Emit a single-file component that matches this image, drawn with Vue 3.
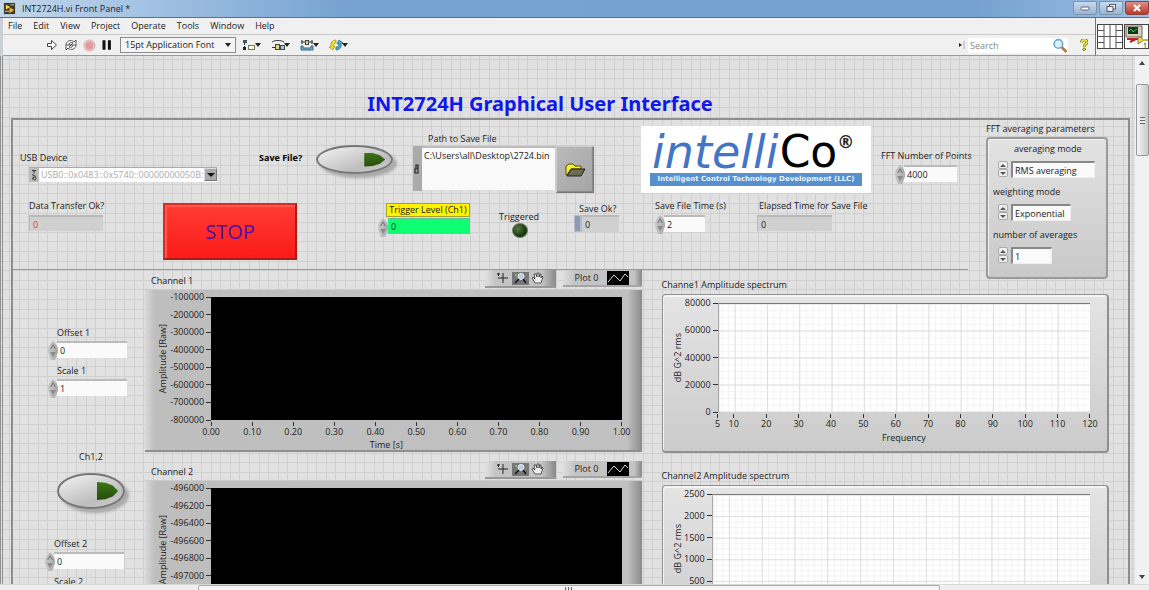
<script setup>
const menus = ['File', 'Edit', 'View', 'Project', 'Operate', 'Tools', 'Window', 'Help']

const charts = [
  {
    id: 'ch1',
    title: 'Channel 1',
    yTicks: ['-100000', '-200000', '-300000', '-400000', '-500000', '-600000', '-700000', '-800000'],
    xTicks: ['0.00', '0.10', '0.20', '0.30', '0.40', '0.50', '0.60', '0.70', '0.80', '0.90', '1.00'],
  },
  {
    id: 'ch2',
    title: 'Channel 2',
    yTicks: ['-496000', '-496200', '-496400', '-496600', '-496800', '-497000', '-497200', '-497400'],
    xTicks: ['0.00', '0.10', '0.20', '0.30', '0.40', '0.50', '0.60', '0.70', '0.80', '0.90', '1.00'],
  },
]

const frequencies = [5, 10, 20, 30, 40, 50, 60, 70, 80, 90, 100, 110, 120]
const spectra = [
  { id: 'sp1', title: 'Channe1 Amplitude spectrum', yTicks: [80000, 60000, 40000, 20000, 0], minor: 4 },
  { id: 'sp2', title: 'Channel2 Amplitude spectrum', yTicks: [2500, 2000, 1500, 1000, 500, 0], minor: 4 },
]

const share = (index, list) => (index * 100) / (list.length - 1) + '%'
const freqShare = (f) => ((f - 5) * 100) / 115
const minorX = Array.from({ length: 57 }, (_, i) => freqShare(6 + i * 2))
const minorY = (s) => {
  const count = (s.yTicks.length - 1) * s.minor
  return Array.from({ length: count }, (_, i) => (i * 100) / count)
}

const averaging = [
  { id: 'mode', label: 'averaging mode', value: 'RMS averaging', size: 'wide' },
  { id: 'weight', label: 'weighting mode', value: 'Exponential', size: 'mid' },
  { id: 'count', label: 'number of averages', value: '1', size: 'narrow' },
]
</script>

<template>
  <div class="window">
    <header class="titlebar">
      <svg class="app-icon" viewBox="0 0 14 14" aria-hidden="true">
        <rect x="1" y="1" width="12" height="12" fill="#3d3a2c" />
        <path d="M3 3 L8 5.5 L3 8Z" fill="#ffd83a" />
        <path d="M7 6 L12 8.5 L7 12Z" fill="#f3b62a" />
        <path d="M2 10H7M8 3H12" stroke="#d9cf9a" />
      </svg>
      <span class="caption">INT2724H.vi Front Panel *</span>
      <div class="win-buttons">
        <button aria-label="Minimize"><svg viewBox="0 0 12 8"><rect x="2" y="3" width="8" height="3" rx="1" fill="#fff" stroke="#667" /></svg></button>
        <button aria-label="Restore"><svg viewBox="0 0 12 8"><rect x="4.500" y="0.500" width="6" height="4.500" fill="#fff" stroke="#556" /><rect x="2" y="2.500" width="6" height="5" fill="#eef" stroke="#556" /></svg></button>
        <button class="close" aria-label="Close"><svg viewBox="0 0 12 8"><path d="M3 1L9 7M9 1L3 7" stroke="#fff" stroke-width="2" /></svg></button>
      </div>
    </header>

    <div class="bars">
      <div class="bar-stack">
        <nav class="menubar"><a v-for="m in menus" :key="m" href="#">{{ m }}</a></nav>
        <div class="toolbar">
          <button class="tool" aria-label="Run"><svg viewBox="0 0 12 12"><path d="M1.500 4.500H5.500V1.500L10.500 6L5.500 10.500V7.500H1.500Z" fill="#fff" stroke="#444" /></svg></button>
          <button class="tool" aria-label="Run continuously"><svg viewBox="0 0 14 12"><path d="M2 6C2 2 7 0 10 3L12 1V6H7L9 4C7 3 5 4 5 6M12 6C12 10 7 12 4 9L2 11V6H7L5 8C7 9 9 8 9 6" fill="#fff" stroke="#555" stroke-width="1" /></svg></button>
          <button class="tool" aria-label="Abort"><svg viewBox="0 0 14 14"><circle cx="7" cy="7" r="6" fill="#e9bcbc" stroke="#d5b5b5" /><circle cx="7" cy="7" r="4" fill="#e49d9d" /></svg></button>
          <button class="tool" aria-label="Pause"><svg viewBox="0 0 10 10"><path d="M2.500 1V9M7 1V9" stroke="#111" stroke-width="2.500" /></svg></button>
          <span class="font-box"><select aria-label="Text settings"><option>15pt Application Font</option></select></span>
          <button class="tool drop" aria-label="Align objects"><svg viewBox="0 0 14 12"><path d="M2.500 1V11" stroke="#234" stroke-dasharray="2 1" /><rect x="1" y="1" width="4" height="3" fill="#456" /><rect x="1" y="8" width="3" height="3" fill="#222" /><rect x="6.500" y="6.500" width="6" height="4" fill="#ffe" stroke="#775" /></svg></button>
          <button class="tool drop" aria-label="Distribute objects"><svg viewBox="0 0 14 12"><path d="M1 3C4 1 10 1 13 3M1 8.500H4" stroke="#333" fill="none" /><rect x="4.500" y="5.500" width="4" height="5" fill="#dd8" stroke="#444" /><rect x="9.500" y="6.500" width="4" height="4" fill="#9cd" stroke="#444" /></svg></button>
          <button class="tool drop" aria-label="Resize objects"><svg viewBox="0 0 14 12"><path d="M1 3H13M2 1V5M12 1V5" stroke="#333" /><rect x="5.500" y="1.500" width="3" height="4" fill="#dd8" stroke="#444" /><path d="M1 7V11H13V7H11V9H3V7Z" fill="#7bb6c9" stroke="#367" /></svg></button>
          <button class="tool drop" aria-label="Reorder"><svg viewBox="0 0 14 12"><path d="M7 1C3 1 1 4 2 8L0 8L4 11L6 7L4 7C4 5 5 4 7 4Z" fill="#f2dc32" stroke="#a58f10" stroke-width=".7" /><path d="M7 11C11 11 13 8 12 4L14 4L10 1L8 5L10 5C10 7 9 8 7 8Z" fill="#4aa9c4" stroke="#27687c" stroke-width=".7" /></svg></button>
          <div class="search">
            <svg class="search-mark" viewBox="0 0 6 8"><path d="M0 2L3 4L0 6Z" fill="#222" /><path d="M5 0V8" stroke="#aaa" /></svg>
            <input id="search" type="text" placeholder="Search" aria-label="Search" />
            <svg class="lens" viewBox="0 0 14 14"><path d="M8 8L13 13" stroke="#b3793f" stroke-width="2.500" /><circle cx="5.500" cy="5.500" r="4" fill="#d7efff" stroke="#75a8cc" stroke-width="1.500" /></svg>
          </div>
          <button class="tool help" aria-label="Help"><svg viewBox="0 0 10 14"><path d="M2 4C2 0 8 0 8 4C8 6 5 6 5 9" fill="none" stroke="#6c6a10" stroke-width="3.500" /><path d="M2 4C2 0 8 0 8 4C8 6 5 6 5 9" fill="none" stroke="#e8e337" stroke-width="2" /><circle cx="5" cy="12" r="1.500" fill="#e8e337" stroke="#6c6a10" /></svg></button>
        </div>
      </div>
      <div class="vi-icons">
        <svg viewBox="0 0 54 37" aria-hidden="true">
          <rect x="1.500" y="6.500" width="25" height="24" fill="#fff" stroke="#444" />
          <path d="M8 6V31M14 6V31M20 6V31M8 18.500H20M1 12.500H8M1 18.500H8M1 24.500H8M20 12.500H26M20 18.500H26M20 24.500H26" stroke="#555" />
          <rect x="28.500" y="6.500" width="24" height="24" fill="#fff" stroke="#444" />
          <rect x="30" y="8" width="16" height="11" fill="#d8cfc0" stroke="#665" />
          <rect x="32" y="9" width="10" height="7" fill="#0b3a16" />
          <path d="M33 13L35 11L37 14L41 11" fill="none" stroke="#3fbf50" />
          <path d="M31 21H44M34 24L40 21" stroke="#b22" stroke-width="2" />
          <path d="M42 18L48 22L42 26Z" fill="#f0df35" stroke="#776" />
          <path d="M46 22H52" stroke="#c9b830" stroke-width="2" />
          <text x="47" y="30" font-size="7">1</text>
        </svg>
      </div>
    </div>

    <div class="workspace">
      <main class="canvas">
        <h1>INT2724H Graphical User Interface</h1>
        <div class="panel">
          <section class="controls">
            <div class="control-rows">
              <div class="row row-one">
                <div class="usb">
                  <label for="usb">USB Device</label>
                  <div class="usb-box">
                    <span class="io-tag"><svg viewBox="0 0 8 13"><path d="M2 2H6M4 2V5M2 6L6 8M3 11C1 9 6 7 6 10C6 12 3 12 3 9" fill="none" stroke="#333" /></svg></span>
                    <select id="usb"><option>USB0::0x0483::0x5740::00000000050B:</option></select>
                    <span class="usb-arrow"></span>
                  </div>
                </div>
                <div class="save-file">
                  <label for="save">Save File?</label>
                  <button id="save" class="oval" aria-label="Save File?"><span class="lamp"></span></button>
                </div>
                <div class="path">
                  <label for="path">Path to Save File</label>
                  <div class="path-box">
                    <span class="path-tag"><svg viewBox="0 0 8 12"><path d="M3 6V2H5V6H2V10H5V7" fill="none" stroke="#222" stroke-width="1.200" /></svg></span>
                    <textarea id="path" spellcheck="false">C:\Users\all\Desktop\2724.bin</textarea>
                    <button class="browse" aria-label="Browse"><svg viewBox="0 0 22 16"><path d="M2 13V4L5 2H9L11 4H17V7H7L3 13Z" fill="#f6ee29" stroke="#55500a" /><path d="M3 14L7 7H21L17 14Z" fill="#6b6b52" stroke="#222" /></svg></button>
                  </div>
                </div>
                <div class="logo">
                  <div class="wordmark"><span class="intelli">intelli</span><span class="co">Co</span><span class="reg">®</span></div>
                  <div class="tagline">Intelligent Control Technology Development (LLC)</div>
                </div>
                <div class="fft">
                  <label for="fft">FFT Number of Points</label>
                  <div class="numeric"><span class="spin"></span><input id="fft" type="text" value="4000" /></div>
                </div>
              </div>

              <div class="row row-two">
                <div class="transfer">
                  <label for="transfer">Data Transfer Ok?</label>
                  <input id="transfer" class="readout red" type="text" value="0" readonly />
                </div>
                <div><button class="stop">STOP</button></div>
                <div class="trigger">
                  <label for="trigger">Trigger Level (Ch1)</label>
                  <div class="numeric"><span class="spin"></span><input id="trigger" type="text" value="0" /></div>
                </div>
                <div class="triggered"><span>Triggered</span><i class="led"></i></div>
                <div class="save-ok">
                  <label for="saveok">Save Ok?</label>
                  <div class="numeric"><span class="radix"></span><input id="saveok" class="readout" type="text" value="0" readonly /></div>
                </div>
                <div class="save-time">
                  <label for="time">Save File Time (s)</label>
                  <div class="numeric"><span class="spin"></span><input id="time" type="text" value="2" /></div>
                </div>
                <div class="elapsed">
                  <label for="elapsed">Elapsed Time for Save File</label>
                  <input id="elapsed" class="readout" type="text" value="0" readonly />
                </div>
              </div>
            </div>
            <fieldset class="averaging">
              <legend>FFT averaging parameters</legend>
              <div class="cluster">
                <div v-for="a in averaging" :key="a.id" class="ring" :class="a.size">
                  <label :for="a.id">{{ a.label }}</label>
                  <div class="ring-line">
                    <span class="arrows"><button :aria-label="'Increase ' + a.label"></button><button class="down" :aria-label="'Decrease ' + a.label"></button></span>
                    <input :id="a.id" type="text" :value="a.value" />
                  </div>
                </div>
              </div>
            </fieldset>
          </section>

          <section class="plots">
            <div class="side">
              <div class="side-field">
                <label for="off1">Offset 1</label>
                <div class="numeric"><span class="spin"></span><input id="off1" type="text" value="0" /></div>
              </div>
              <div class="side-field">
                <label for="sc1">Scale 1</label>
                <div class="numeric"><span class="spin"></span><input id="sc1" type="text" value="1" /></div>
              </div>
              <div class="side-switch">
                <label for="ch12">Ch1,2</label>
                <button id="ch12" class="oval round" aria-label="Ch1,2"><span class="lamp"></span></button>
              </div>
              <div class="side-field second">
                <label for="off2">Offset 2</label>
                <div class="numeric"><span class="spin"></span><input id="off2" type="text" value="0" /></div>
              </div>
              <div class="side-field second">
                <label for="sc2">Scale 2</label>
                <div class="numeric"><span class="spin"></span><input id="sc2" type="text" value="1" /></div>
              </div>
            </div>

            <div class="column">
              <article v-for="c in charts" :key="c.id" class="chart">
                <div class="chart-head">
                  <h2>{{ c.title }}</h2>
                  <div class="palette">
                    <button aria-label="Cursor"><svg viewBox="0 0 14 12"><path d="M7 1V11M2 6H12M1 2H4M2.500 1V4" stroke="#222" /></svg></button>
                    <button class="active" aria-label="Zoom"><svg viewBox="0 0 14 12"><circle cx="8" cy="4.500" r="3" fill="#bcd" stroke="#eef" /><path d="M6 7L2 11M10 7L13 11" stroke="#111" stroke-width="1.500" /><path d="M2 3H4" stroke="#6c5" stroke-width="2" /></svg></button>
                    <button aria-label="Pan"><svg viewBox="0 0 14 12"><path d="M5 11L2 6L3 5L5 7L4 2L6 2L7 5V1L9 1V5L10 2L11 2V6L12 4L13 5L11 11Z" fill="#eee" stroke="#333" stroke-width=".8" /></svg></button>
                  </div>
                  <div class="legend">Plot 0<svg viewBox="0 0 22 14"><rect width="22" height="14" fill="#000" /><path d="M1 11L7 4L13 10L18 3L21 6" fill="none" stroke="#ddd" /></svg></div>
                </div>
                <div class="chart-body">
                  <div class="y-name"><span>Amplitude [Raw]</span></div>
                  <div class="y-axis"><span v-for="(t, i) in c.yTicks" :key="t" :style="{ top: share(i, c.yTicks) }">{{ t }}</span></div>
                  <div class="plot"></div>
                  <div class="x-axis"><span v-for="(t, i) in c.xTicks" :key="t" :style="{ left: share(i, c.xTicks) }">{{ t }}</span></div>
                  <div class="x-name">Time [s]</div>
                </div>
              </article>
            </div>

            <div class="column spectra">
              <article v-for="s in spectra" :key="s.id" class="spectrum" :class="s.id">
                <h2>{{ s.title }}</h2>
                <div class="spectrum-body">
                  <div class="y-name"><span>dB G^2 rms</span></div>
                  <div class="y-axis"><span v-for="(t, i) in s.yTicks" :key="t" :style="{ top: share(i, s.yTicks) }">{{ t }}</span></div>
                  <svg class="plot" viewBox="0 0 100 100" preserveAspectRatio="none">
                    <g stroke="#f3f3f3">
                      <line v-for="x in minorX" :key="'x' + x" :x1="x" :x2="x" y1="0" y2="100" />
                      <line v-for="y in minorY(s)" :key="'y' + y" x1="0" x2="100" :y1="y" :y2="y" />
                    </g>
                    <g stroke="#dfdfdf">
                      <line v-for="f in frequencies" :key="f" :x1="freqShare(f)" :x2="freqShare(f)" y1="0" y2="100" />
                      <line v-for="(t, i) in s.yTicks" :key="t" x1="0" x2="100" :y1="share(i, s.yTicks)" :y2="share(i, s.yTicks)" />
                    </g>
                  </svg>
                  <div class="x-axis"><span v-for="f in frequencies" :key="f" :style="{ left: freqShare(f) + '%' }">{{ f }}</span></div>
                  <div class="x-name">Frequency</div>
                </div>
              </article>
            </div>
          </section>
        </div>
      </main>
      <div class="v-scroll"><i class="up"></i><b></b><i class="dn"></i></div>
    </div>
    <div class="h-scroll"><b></b></div>
  </div>
</template>

<style>
body { margin: 0; background: #f0f0f0; }
</style>

<style scoped>
* { box-sizing: border-box; }
.window { height: 100vh; display: flex; flex-direction: column; overflow: hidden; font: 9px/12px "Open Sans", "Noto Sans", sans-serif; color: #222; background: #f0f0f0; }
button, input, select, textarea { font: inherit; color: inherit; margin: 0; padding: 0; border: 0; border-radius: 0; outline: 0; min-width: 0; }
svg { display: block; }
h1, h2 { margin: 0; font-weight: 400; }
label { white-space: nowrap; display: block; }

.titlebar { flex: none; height: 18px; display: flex; align-items: center; padding-left: 3px; background: linear-gradient(to right, #c2d6eb, #a5c3e3 12%, #77a3d2 30%, #76a2d1 85%, #9dbfe2); border-bottom: 1px solid #5c7186; }
.app-icon { width: 13px; height: 13px; margin-right: 6px; }
.win-buttons { margin-left: auto; display: flex; gap: 2px; align-self: flex-start; padding-top: 1px; }
.win-buttons button { width: 24px; height: 14px; border: 1px solid #7c93aa; border-radius: 0 0 3px 3px; background: linear-gradient(#c8daec, #9ab6d3); }
.win-buttons .close { background: linear-gradient(#dd9084, #b8392b); border-color: #8b4340; }
.win-buttons svg { height: 8px; margin: auto; }

.bars { flex: none; display: flex; height: 38px; border-left: 3px solid #cbd0d5; }
.bar-stack { flex: 1; display: flex; flex-direction: column; }
.menubar { height: 17px; display: flex; align-items: center; gap: 11px; padding-left: 5px; border-bottom: 1px solid #c9c9c9; }
.menubar a { color: #222; text-decoration: none; }
.toolbar { flex: 1; display: flex; align-items: center; padding-left: 39px; border-bottom: 1px solid #999; }
.tool { background: none; height: 14px; width: 19px; }
.tool svg { height: 12px; margin: 0 auto; }
.tool:nth-child(3) svg { height: 13px; }
.tool:nth-child(4) { width: 16px; }
.tool.drop { width: 19px; margin-right: 10px; position: relative; }
.tool.drop svg { height: 12px; margin: 0; }
.tool.drop::after { content: ""; position: absolute; right: 0; top: 5px; border: 3px solid transparent; border-top: 4px solid #222; border-bottom: 0; }
.font-box { position: relative; margin: 0 6px 0 5px; }
.font-box select { appearance: none; width: 116px; height: 16px; padding-left: 4px; border: 1px solid #8b8b8b; background: #f4f4f4; display: block; }
.font-box::after { content: ""; position: absolute; right: 5px; top: 6px; border: 3px solid transparent; border-top: 4px solid #222; border-bottom: 0; }
.search { margin-left: auto; display: flex; align-items: center; height: 15px; }
.search-mark { width: 6px; height: 8px; margin-right: 3px; }
.search input { width: 84px; height: 15px; background: #fff; padding-left: 2px; }
.search input::placeholder { color: #888; opacity: 1; }
.lens { width: 16px; height: 15px; background: #fff; }
.help { width: 18px; margin: 0 2px 0 7px; }
.vi-icons { width: 54px; border-left: 1px solid #777; border-bottom: 1px solid #999; }
.vi-icons svg { width: 54px; height: 37px; }

.workspace { flex: 1; min-height: 0; display: flex; }
.canvas { flex: 1; overflow: auto; scrollbar-width: none; padding-left: 8px; padding-right: 5px; border-left: 3px double #8f8f8f;
  background-color: #e1e1e1;
  background-image:
    linear-gradient(to right, #d0d0d0 1px, transparent 1px 10px, #d0d0d0 10px 11px, transparent 11px 19px, #d0d0d0 19px 20px, transparent 20px 29px, #d0d0d0 29px 30px, transparent 30px 38px, #d0d0d0 38px 39px, transparent 39px),
    linear-gradient(#d0d0d0 1px, transparent 1px 10px, #d0d0d0 10px 11px, transparent 11px 19px, #d0d0d0 19px 20px, transparent 20px 29px, #d0d0d0 29px 30px, transparent 30px 38px, #d0d0d0 38px 39px, transparent 39px);
  background-size: 48px 48px; background-position: 6px 3px; }
h1 { height: 62px; padding-top: 35px; padding-right: 61px; text-align: center; font: 700 20px/26px "Noto Sans", sans-serif; color: #1018ea; }
.panel { border: 2px solid #8d8d8d; border-width: 2px 2px 0 2px; }

.controls { height: 150px; display: flex; }
.control-rows { flex: 1; min-width: 0; height: 150px; border-bottom: 1px solid #999; margin-right: 18px; }
.row { display: grid; }
.row > * { min-width: 0; }
.row-one { height: 79px; margin-right: -18px; padding-left: 7px; grid-template-columns: minmax(0, 239fr) minmax(0, 154fr) minmax(0, 228fr) minmax(0, 240fr) minmax(0, 105fr); }
.row-two { height: 70px; margin-right: -18px; padding-left: 16px; grid-template-columns: minmax(0, 134fr) minmax(0, 215fr) minmax(0, 121fr) minmax(0, 75fr) minmax(0, 81fr) minmax(0, 102fr) minmax(0, 229fr); }

.numeric { display: flex; }
.numeric input { height: 17px; padding-left: 3px; background: #fafafa; border-top: 2px solid #bbb; }
.spin { flex: none; width: 10px; height: 19px; margin-right: -1px; background: linear-gradient(to right, #c9c9c9, #a9a9a9); clip-path: polygon(50% 0, 90% 25%, 100% 45%, 100% 60%, 70% 100%, 30% 100%, 0 60%, 0 40%, 10% 25%); position: relative; }
.spin::before, .spin::after { content: ""; position: absolute; left: 2px; width: 6px; height: 5px; background: #777; }
.spin::before { top: 3px; clip-path: polygon(50% 0, 100% 100%, 80% 100%, 50% 40%, 20% 100%, 0 100%); }
.spin::after { top: 11px; clip-path: polygon(0 0, 100% 0, 50% 100%); background: #8a8a8a; }
.readout { height: 16px; padding-left: 3px; background: #d0d0d0; border-top: 2px solid #b9b9b9; border-left: 1px solid #bbb; }
.numeric .readout { background: #d0d0d0; }

.usb { padding-top: 32px; }
.usb-box { display: flex; width: 188px; height: 15px; margin: 3px 0 0 9px; background: #fff; border-top: 1px solid #aaa; }
.io-tag { width: 10px; background: #bdbdbd; }
.io-tag svg { width: 8px; height: 14px; margin: 0 1px; }
.usb-box select { appearance: none; flex: 1; height: 14px; padding-left: 2px; background: #fff; color: #aaa; }
.usb-arrow { width: 13px; height: 13px; background: #aaa; border: 1px solid #777; border-top-color: #ddd; border-left-color: #ddd; }
.usb-arrow::after { content: ""; display: block; margin: 4px 2px; width: 0; border: 4px solid transparent; border-top: 4px solid #111; border-bottom: 0; }

.save-file { display: flex; gap: 14px; padding-top: 25px; }
.save-file label { padding-top: 7px; font-weight: 700; color: #000; }
.oval { flex: none; width: 77px; height: 29px; border: 2px solid #777; border-radius: 50%; background: linear-gradient(160deg, #f4f4f4, #bdbdbd 70%, #d0d0d0); box-shadow: 4px 4px 3px #aaa; display: flex; align-items: center; justify-content: flex-end; padding-right: 6px; }
.lamp { width: 21px; height: 14px; background: linear-gradient(#3b7416, #264e0c); clip-path: polygon(0 0, 40% 4%, 75% 20%, 100% 50%, 75% 80%, 40% 96%, 0 100%); }
.oval.round { width: 68px; height: 36px; padding-right: 5px; }
.round .lamp { height: 18px; }

.path { padding-top: 13px; }
.path label { padding-left: 15px; }
.path-box { display: flex; width: 181px; height: 47px; margin-top: 1px; }
.path-tag { flex: none; width: 9px; background: #ababab; margin-bottom: 2px; padding-top: 17px; }
.path-tag svg { width: 8px; height: 12px; }
.path textarea { flex: 1; height: 44px; padding: 2px 0 0 2px; resize: none; overflow: hidden; background: #f9f9f9; border-top: 2px solid #bbb; border-right: 1px solid #ccc; }
.browse { flex: none; width: 38px; background: linear-gradient(135deg, #bababa, #a5a5a5); border: 1px solid #777; border-top-color: #ccc; border-left-color: #ccc; box-shadow: inset -1px -1px 1px #888; }
.browse svg { width: 22px; height: 16px; margin: auto; }

.logo { width: 230px; height: 67px; margin-top: 6px; padding: 8px 9px 0; background: #fff; }
.wordmark { display: flex; height: 39px; font: 46px/36px "DejaVu Sans", sans-serif; color: #4475c4; padding-left: 2px; }
.intelli { font-style: italic; }
.co { color: #000; font-size: 44px; padding-left: 1px; }
.reg { color: #222; font: 700 17px/16px "DejaVu Sans", sans-serif; }
.tagline { height: 13px; text-align: center; background: #5790cd; color: #e8f2ff; font: 700 7px/13px "DejaVu Sans", sans-serif; white-space: nowrap; }

.fft { padding-top: 30px; }
.fft .numeric { margin: 3px 0 0 14px; }
.fft input { width: 53px; }

.transfer { padding-top: 1px; }
.transfer input { display: block; width: 74px; margin-top: 3px; }
.transfer label { width: 100px; }
.red { color: #e33; }
.stop { width: 134px; height: 57px; margin-top: 4px; background: linear-gradient(#ff3c35, #fb1b17); border: 2px solid #a81d1a; border-top-color: #d82c26; border-left-color: #d82c26; box-shadow: inset 2px 2px 1px #ff5a50; color: #4414ae; font: 20px/20px "Open Sans", sans-serif; }
.trigger { padding-top: 4px; }
.trigger label { width: 84px; height: 14px; margin-left: 8px; background: #fff200; border: 1px solid #aa9f2c; text-align: center; }
.trigger .numeric { margin-top: 1px; }
.trigger input { width: 82px; background: #0fff72; height: 16px; margin-left: 1px; border-top: 1px solid #6b9; }
.triggered { padding-top: 12px; width: 42px; }
.led { display: block; width: 16px; height: 15px; margin: 0 auto; border-radius: 50%; background: radial-gradient(circle at 35% 35%, #577b45, #163b0b 60%); border: 1px solid #6b7566; }
.save-ok { padding-top: 4px; }
.save-ok label { padding-left: 5px; }
.save-ok .numeric input { width: 38px; height: 17px; }
.radix { width: 7px; height: 17px; background: #8b9bb5; border: 1px solid #b8bcc8; }
.save-time label { padding-top: 1px; }
.save-time .numeric { margin-top: 3px; }
.save-time input { width: 41px; }
.elapsed { padding-top: 1px; }
.elapsed label { padding-left: 2px; }
.elapsed input { display: block; width: 75px; margin-top: 3px; }

.averaging { flex: none; width: 122px; margin: 0 20px 0 0; padding: 0; border: 0; height: 160px; min-width: 0; }
.averaging legend { padding: 3px 0 3px; height: 17px; white-space: nowrap; }
.cluster { height: 142px; padding: 4px 5px; border: 2px solid #9a9a9a; border-radius: 4px; background: linear-gradient(#e2e2e2, #c9c9c9); box-shadow: inset 1px 1px 0 #f2f2f2; }
.ring { height: 43px; padding-left: 5px; }
.ring label { margin-left: -5px; }
.ring.wide label { margin-left: 16px; }
.ring-line { display: flex; gap: 3px; margin-top: 6px; }
.arrows { width: 10px; display: flex; flex-direction: column; }
.arrows button { width: 10px; height: 8px; border: 1px solid #aaa; border-radius: 2px; background: #eee; padding: 2px 1px; }
.arrows button::after { content: ""; display: block; width: 0; border: 3px solid transparent; border-bottom: 3px solid #555; border-top: 0; }
.arrows .down::after { border-bottom: 0; border-top: 3px solid #555; }
.ring input { height: 17px; width: 84px; padding-left: 2px; background: #fafafa; border: 1px solid #eee; border-top: 2px solid #888; border-left: 2px solid #888; }
.ring.mid input { width: 60px; }
.ring.narrow input { width: 41px; }

.plots { display: grid; grid-template-columns: minmax(0, 132fr) minmax(0, 496fr) minmax(0, 447fr); padding-right: 39px; }
.side { padding: 57px 0 0 35px; }
.side-field { height: 38px; }
.side-field label { padding-left: 9px; }
.side-field .numeric { margin-top: 2px; }
.side-field input { width: 70px; }
.side-switch { height: 87px; margin-top: 48px; margin-left: 9px; }
.side-switch label { width: 68px; text-align: center; }
.side-switch .oval { margin-top: 10px; }
.side-field.second { margin-left: -3px; }

.chart { height: 191px; }
.chart-head { display: flex; height: 19px; align-items: flex-start; }
.chart-head h2 { flex: 1; font-size: 9px; line-height: 12px; padding: 5px 0 0 6px; }
.palette { width: 71px; height: 18px; display: flex; align-items: center; padding-left: 10px; background: linear-gradient(to right, #e0e0e0, #c4c4c4 15% 80%, #888); border-bottom: 2px solid #999; }
.palette button { width: 17px; height: 13px; background: none; }
.palette .active { background: #777; }
.palette svg { width: 14px; height: 12px; margin: auto; }
.legend { width: 79px; height: 17px; margin-left: 7px; display: flex; align-items: center; gap: 9px; padding-left: 12px; background: linear-gradient(to right, #ddd, #c4c4c4 15% 90%, #888); border-bottom: 2px solid #a5a5a5; }
.legend svg { width: 22px; height: 14px; }
.chart-body { height: 163px; display: grid; grid-template-columns: 25px 41px minmax(0, 1fr) 20px; grid-template-rows: 7px 123px 19px 13px; background: linear-gradient(to right, #dadada, #bebebe 10px, #c1c1c1 97%, #8a8a8a); border-bottom: 2px solid #8f8f8f; border-top: 1px solid #ccc; }
.y-name { grid-row: 2; grid-column: 1; display: flex; align-items: center; justify-content: center; padding-left: 10px; }
.y-name span { writing-mode: vertical-rl; transform: rotate(180deg); white-space: nowrap; }
.y-axis { grid-row: 2; grid-column: 2; position: relative; }
.y-axis span { position: absolute; right: 0; height: 12px; margin-top: -6px; display: flex; align-items: center; gap: 2px; }
.y-axis span::after { content: ""; width: 5px; height: 1px; background: #333; }
.plot { grid-row: 2; grid-column: 3; background: #000; width: 100%; height: 100%; }
.x-axis { grid-row: 3; grid-column: 3; position: relative; }
.x-axis span { position: absolute; top: 2px; width: 30px; margin-left: -15px; text-align: center; }
.x-axis span::before { content: ""; display: block; width: 1px; height: 4px; margin: 0 auto; background: #333; }
.x-name { grid-row: 4; grid-column: 3; text-align: center; padding-right: 60px; }

.spectra { margin-left: 20px; margin-right: -20px; }
.spectrum { height: 191px; padding-top: 9px; }
.spectrum h2 { font-size: 9px; line-height: 12px; height: 15px; }
.spectrum-body { height: 159px; display: grid; grid-template-columns: 21px 34px minmax(0, 1fr) 17px; grid-template-rows: 8px 109px 20px 16px; border: 1px solid #909090; border-width: 1px 2px 2px 1px; border-radius: 4px; background: linear-gradient(#e4e4e4, #cbcbcb); box-shadow: inset 1px 2px 0 #f5f5f5; }
.sp2 .spectrum-body { grid-template-columns: 21px 28px minmax(0, 1fr) 17px; }
.spectrum .plot { background: #fff; border-top: 1px solid #777; border-left: 1px solid #aaa; }
.spectrum .plot line { vector-effect: non-scaling-stroke; shape-rendering: crispEdges; }
.spectrum .x-name { padding-right: 0; }

.v-scroll { width: 14px; display: flex; flex-direction: column; align-items: center; background: #f1f1f1; }
.v-scroll i { width: 0; border: 3px solid transparent; }
.v-scroll .up { border-bottom: 4px solid #444; border-top: 0; margin: 5px 0 19px; }
.v-scroll .dn { border-top: 4px solid #444; border-bottom: 0; margin: auto 0 5px; }
.v-scroll b { width: 13px; height: 72px; border: 1px solid #999; border-radius: 2px; background: linear-gradient(to right, #f5f5f5, #c9c9cc); }
.v-scroll b::after { content: ""; display: block; width: 5px; height: 7px; margin: 32px auto; background: repeating-linear-gradient(#666 0 1px, #eee 1px 3px); }
.h-scroll { flex: none; height: 6px; padding-left: 198px; background: #efefef; border-top: 1px solid #d8d8d8; overflow: hidden; }
.h-scroll b { display: flex; justify-content: center; width: 78%; height: 10px; border: 1px solid #aaa; border-radius: 2px; background: #f6f6f6; }
.h-scroll b::after { content: ""; width: 7px; height: 4px; margin-top: 1px; background: repeating-linear-gradient(to right, #666 0 1px, #eee 1px 3px); }
</style>
